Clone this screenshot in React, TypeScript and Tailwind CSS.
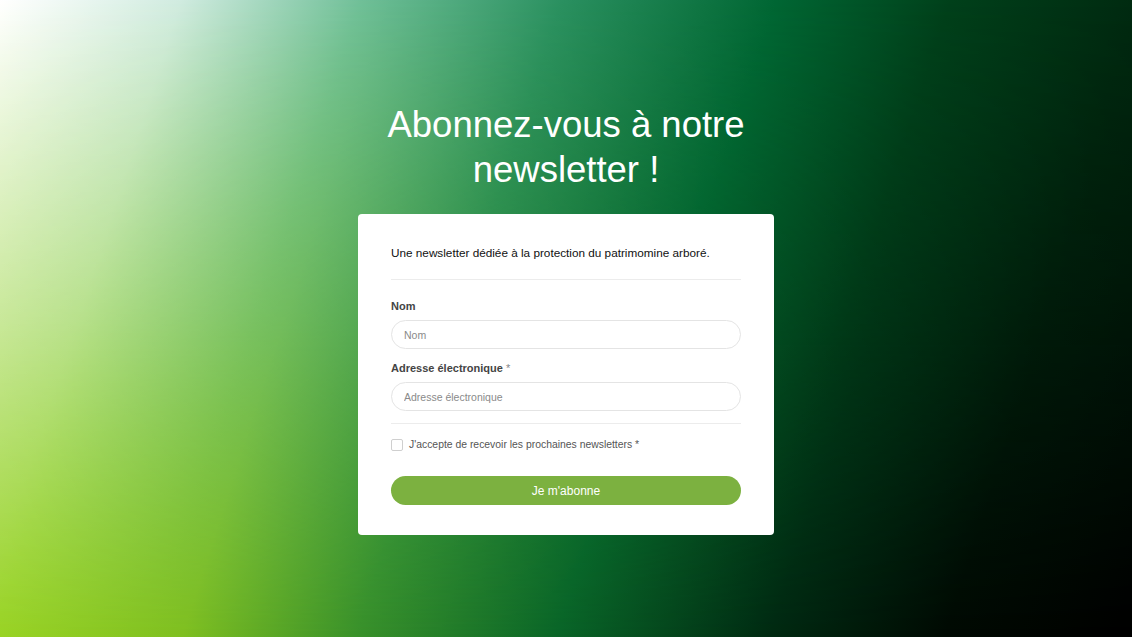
export default function App() {
  return (
    <div className="relative flex h-[637px] w-full flex-col items-center justify-center overflow-hidden bg-[linear-gradient(108deg,#b8e248_0%,#9ad424_15%,#80c020_29%,#3a922a_42%,#0a6628_57%,#002a12_73%,#000a03_86%,#000_100%)] font-['Liberation_Sans',Arial,sans-serif]">
      {/* top half of the backdrop is bluer and lighter, faded out towards the bottom */}
      <div className="pointer-events-none absolute inset-0 bg-[linear-gradient(108deg,#ffffff_0%,#d0ebe0_13.5%,#6fbf98_27%,#2a9060_42%,#006633_58%,#00401a_71%,#002a10_85%,#001a0a_100%)] [mask-image:linear-gradient(to_bottom,#000_0%,rgba(0,0,0,0.55)_50%,transparent_100%)]" />

      <h1 className="relative mb-[22px] max-w-[416px] text-center text-[36.5px] font-normal leading-[45px] text-white">
        Abonnez-vous à notre newsletter !
      </h1>

      <div className="relative w-[416px] rounded-[4px] bg-white px-[33px] pb-[30px] pt-[31px]">
        <p className="text-[11.75px] leading-[16px] text-[#111]">
          Une newsletter dédiée à la protection du patrimomine arboré.
        </p>
        <div className="mt-[18px] h-px bg-[#ececec]" />

        <label className="mt-[19px] block text-[11px] font-bold leading-[14px] text-[#444]">Nom</label>
        <input
          type="text"
          placeholder="Nom"
          className="mt-[7px] block h-[29px] w-full rounded-full border border-[#e4e4e4] px-3 text-[10.5px] text-[#333] outline-none placeholder:text-[#8a8a8a]"
        />

        <label className="mt-[12px] block text-[11px] font-bold leading-[14px] text-[#444]">
          Adresse électronique <span className="font-normal text-[#888]">*</span>
        </label>
        <input
          type="email"
          placeholder="Adresse électronique"
          className="mt-[7px] block h-[29px] w-full rounded-full border border-[#e4e4e4] px-3 text-[10.5px] text-[#333] outline-none placeholder:text-[#8a8a8a]"
        />
        <div className="mt-[12px] h-px bg-[#ececec]" />

        <label className="mt-[14px] flex items-center gap-[6px] text-[10.4px] leading-[14px] text-[#555]">
          <span className="block h-[12px] w-[12px] rounded-[2px] border border-[#cfcfcf] bg-white" />
          J'accepte de recevoir les prochaines newsletters *
        </label>

        <button
          type="button"
          className="mt-[24px] block h-[29px] w-full rounded-full bg-[#7cb140] text-[12px] text-white"
        >
          Je m'abonne
        </button>
      </div>
    </div>
  );
}
